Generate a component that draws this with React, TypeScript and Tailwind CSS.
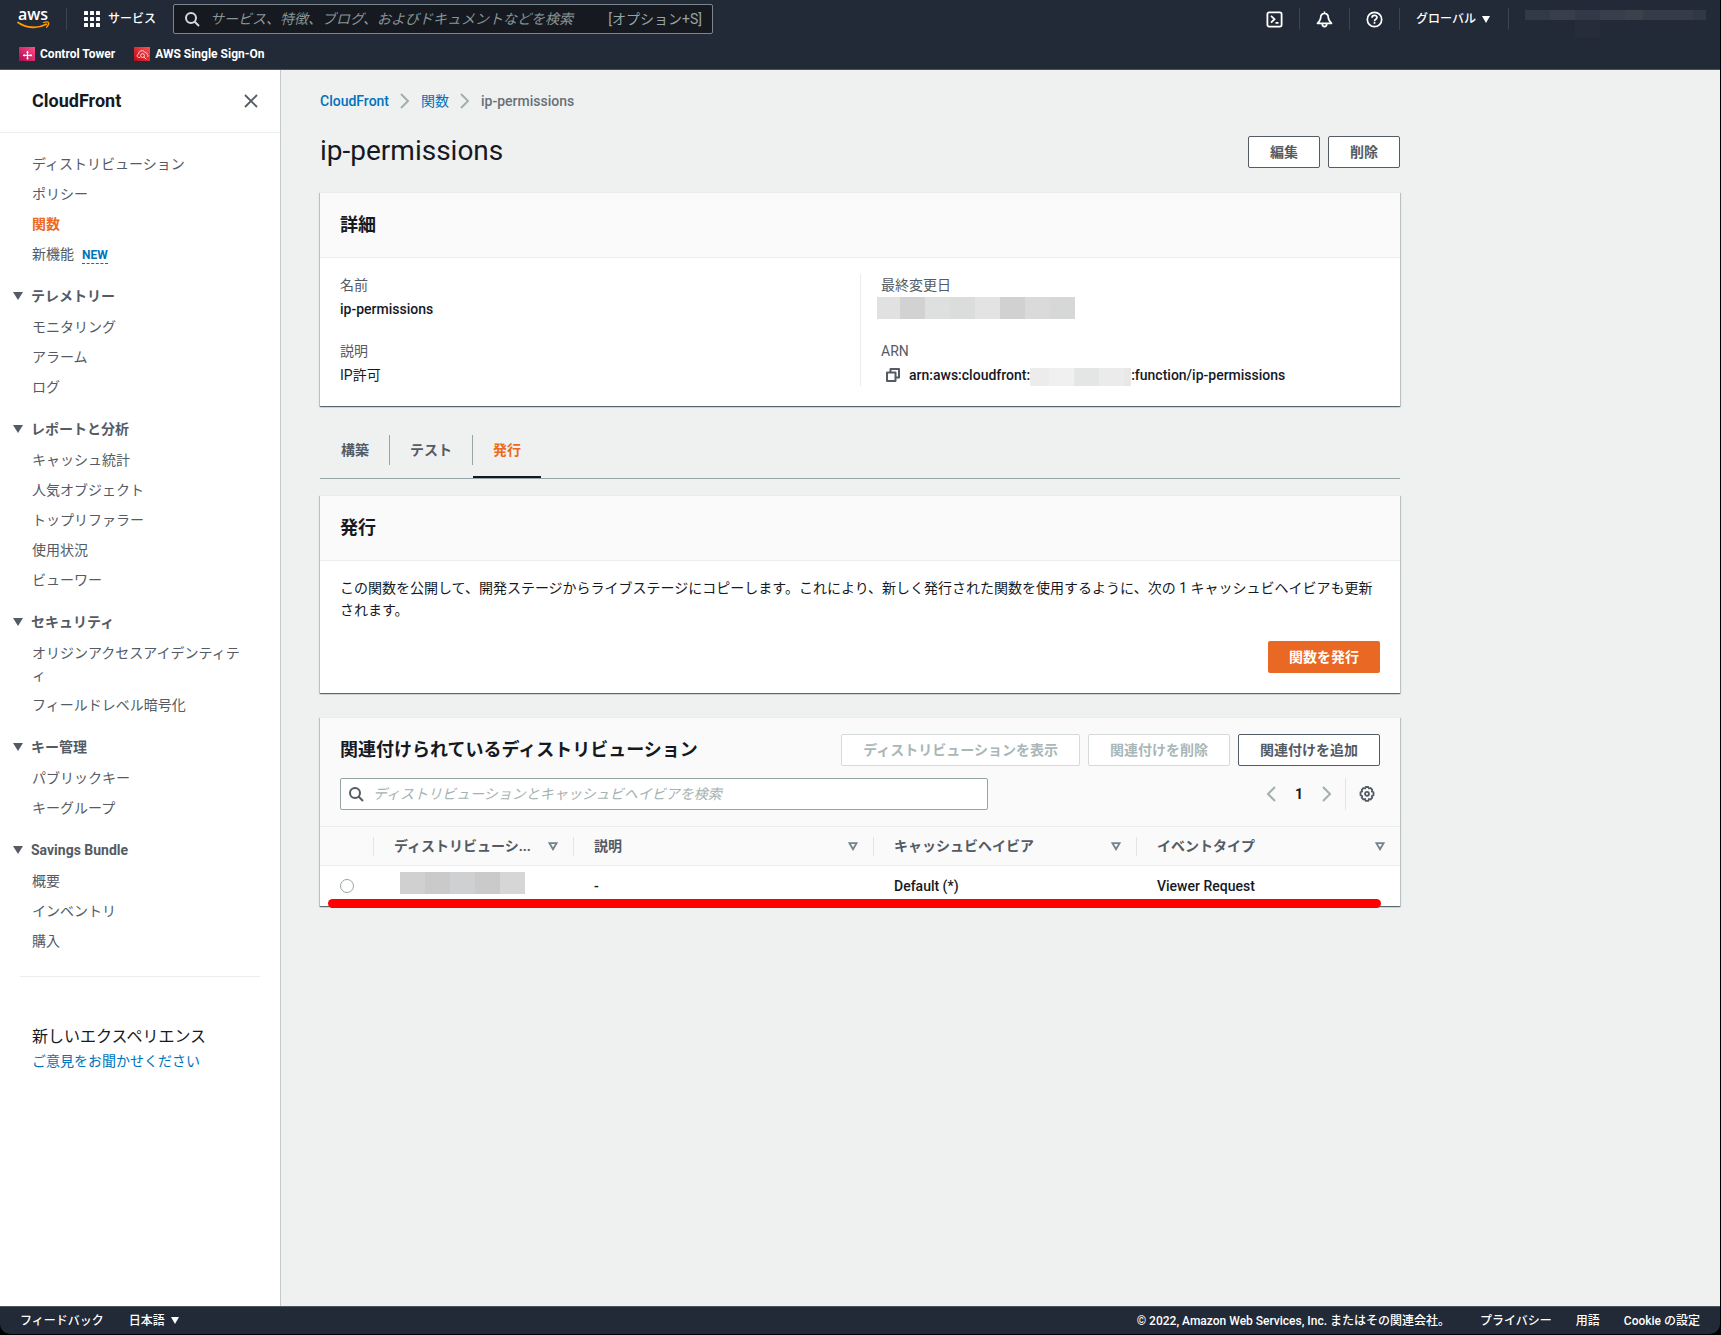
import type { ReactNode } from 'react'

const navTop = ['ディストリビューション', 'ポリシー', '関数']

const navSections = [
  { title: 'テレメトリー', items: ['モニタリング', 'アラーム', 'ログ'] },
  {
    title: 'レポートと分析',
    items: ['キャッシュ統計', '人気オブジェクト', 'トップリファラー', '使用状況', 'ビューワー'],
  },
  { title: 'セキュリティ', items: ['オリジンアクセスアイデンティティ', 'フィールドレベル暗号化'] },
  { title: 'キー管理', items: ['パブリックキー', 'キーグループ'] },
  { title: 'Savings Bundle', items: ['概要', 'インベントリ', '購入'] },
]

function AwsLogo() {
  return (
    <svg width="34" height="34" viewBox="0 -7 34 34" role="img" aria-label="AWS">
      <text
        x="16"
        y="11"
        textAnchor="middle"
        fontFamily="Open Sans"
        fontWeight="600"
        fontSize="16"
        fill="#fff"
      >
        aws
      </text>
      <path d="M1 13.500c8.500 5.800 20 6.300 28.300 1.800" fill="none" stroke="#ff9900" strokeWidth="1.800" strokeLinecap="round" />
      <path d="M26.500 13.500c2-.7 4.500-.8 5 0 .4.900-.4 3.200-1.900 4.700" fill="none" stroke="#ff9900" strokeWidth="1.300" strokeLinecap="round" />
    </svg>
  )
}

function GridIcon() {
  return (
    <svg width="16" height="16" viewBox="0 0 16 16" fill="#fff" aria-hidden="true">
      {[0, 6, 12].map((y) =>
        [0, 6, 12].map((x) => <rect key={`${x}-${y}`} x={x} y={y} width="4" height="4" rx="0.6" />),
      )}
    </svg>
  )
}

function SearchIcon({ className }: { className: string }) {
  return (
    <svg width="16" height="16" viewBox="0 0 16 16" fill="none" stroke="currentColor" strokeWidth="2" className={className} aria-hidden="true">
      <circle cx="7" cy="7" r="5" />
      <path d="M15 15l-4.500-4.500" />
    </svg>
  )
}

function ControlTowerIcon() {
  return (
    <svg width="16" height="14" viewBox="0 0 16 14" aria-hidden="true">
      <defs>
        <linearGradient id="ct" x1="0" y1="1" x2="1" y2="0">
          <stop offset="0" stopColor="#b0084d" />
          <stop offset="1" stopColor="#ff4f8b" />
        </linearGradient>
      </defs>
      <rect width="16" height="14" fill="url(#ct)" />
      <path d="M8.500 4v8.500M4 8.300h9" stroke="#fff" strokeWidth="1.200" />
      <path d="M7.300 5.300h2.400M7.300 11.300h2.400M5.300 7.100v2.400M11.800 7.100v2.400" stroke="#fff" strokeWidth="0.700" />
    </svg>
  )
}

function SsoIcon() {
  return (
    <svg width="16" height="14" viewBox="0 0 16 14" aria-hidden="true">
      <defs>
        <linearGradient id="sso" x1="0" y1="1" x2="1" y2="0">
          <stop offset="0" stopColor="#bd0816" />
          <stop offset="1" stopColor="#ff5252" />
        </linearGradient>
      </defs>
      <rect width="16" height="14" fill="url(#sso)" />
      <g fill="none" stroke="#fff" strokeWidth="0.800">
        <path d="M6 10.500H4.800C2.600 10.300 2.600 7.400 4.600 7c0-3.500 5-4.600 6.300-1.500 1 -.3 1.900.4 1.900 1.500 1.400.5 1.500 2.300.4 3" />
        <circle cx="8.500" cy="8.600" r="1.900" />
        <path d="M9.900 10l2.400 2.300" />
      </g>
    </svg>
  )
}

function CaretDown({ className }: { className: string }) {
  return (
    <svg viewBox="0 0 10 8" preserveAspectRatio="none" className={className} aria-hidden="true">
      <path d="M0 0h10L5 8z" fill="currentColor" />
    </svg>
  )
}

function SortIcon() {
  return (
    <svg width="10" height="9" viewBox="0 0 10 9" className="shrink-0" aria-hidden="true">
      <path d="M1.500 1.200h7L5 7.300z" fill="none" stroke="#74848a" strokeWidth="1.800" />
    </svg>
  )
}

function Chevron({ left = false }: { left?: boolean }) {
  return (
    <svg width="10" height="16" viewBox="0 0 10 16" fill="none" stroke="#a2afaf" strokeWidth="2" aria-hidden="true">
      <path d={left ? 'M9 1L2 8l7 7' : 'M1 1l7 7-7 7'} />
    </svg>
  )
}

function GearIcon() {
  return (
    <svg width="16" height="16" viewBox="0 0 16 16" fill="none" stroke="#545b64" strokeWidth="1.800" aria-hidden="true">
      <path
        strokeLinejoin="round"
        d="M6.700 1h2.600l.6 1.500 1.600-.5 1.800 1.800-.5 1.600 1.700.9v2.900l-1.700.9.500 1.600-1.800 1.800-1.600-.5-.6 1.900H6.700l-.6-1.900-1.600.5-1.800-1.800.5-1.600L1.500 9.200V6.300l1.700-.9-.5-1.600L4.500 2l1.600.5z"
      />
      <circle cx="8" cy="7.800" r="2" />
    </svg>
  )
}

function CopyIcon() {
  return (
    <svg width="14" height="14" viewBox="0 0 14 14" fill="none" stroke="#545b64" strokeWidth="2" aria-hidden="true">
      <path d="M1 4.500h8.500V13H1z" strokeLinejoin="round" />
      <path d="M4.500 4.500V1H13v8.500H9.500" strokeLinejoin="round" />
    </svg>
  )
}

function Button({ children, disabled = false }: { children: ReactNode; disabled?: boolean }) {
  return (
    <button
      type="button"
      disabled={disabled}
      className="h-8 whitespace-nowrap rounded-xs border border-[#545b64] bg-white px-[21px] font-bold text-[#545b64] disabled:border-[#d5dbdb] disabled:text-[#aab7b8]"
    >
      {children}
    </button>
  )
}

function Card({ children }: { children: ReactNode }) {
  return (
    <section className="border-t border-[#eaeded] bg-white shadow-[0_1px_1px_0_rgba(0,28,36,0.5),1px_1px_1px_0_rgba(0,28,36,0.15),-1px_1px_1px_0_rgba(0,28,36,0.15)]">
      {children}
    </section>
  )
}

function CardHeader({ title }: { title: string }) {
  return (
    <div className="flex h-[65px] items-center border-b border-[#eaeded] bg-[#fafafa] px-5">
      <h2 className="text-lg leading-6 font-bold">{title}</h2>
    </div>
  )
}

function Divider() {
  return <span className="h-[22px] w-px bg-[#3b4552]" />
}

function Header() {
  return (
    <header className="flex h-[70px] flex-col border-b border-[#4b5560] bg-[#212a36] text-xs font-medium text-white">
      <div className="flex h-[38px] items-center pr-[14px] pl-[17px]">
        <a href="#home">
          <AwsLogo />
        </a>
        <span className="mr-[17px] ml-[15px] flex">
          <Divider />
        </span>
        <button type="button" className="flex items-center gap-2">
          <GridIcon />
          サービス
        </button>
        <div className="ml-[17px] flex h-[30px] w-[540px] items-center rounded-xs border border-[#7a888d] bg-[#16191f] px-[10px] text-sm font-normal text-[#95a5a6]">
          <SearchIcon className="shrink-0 text-[#d5dbdb]" />
          <input
            type="search"
            aria-label="サービス、特徴、ブログ、およびドキュメントなどを検索"
            placeholder="サービス、特徴、ブログ、およびドキュメントなどを検索"
            className="ml-[10px] min-w-0 flex-1 bg-transparent italic outline-none placeholder:text-[#879596]"
          />
          <span>[オプション+S]</span>
        </div>
        <div className="ml-auto flex items-center gap-4">
          <button type="button" aria-label="CloudShell">
            <svg width="17" height="17" viewBox="0.5 0.5 17 17" fill="none" stroke="#fff" strokeWidth="1.800" aria-hidden="true">
              <rect x="1.900" y="1.900" width="14.200" height="14.200" rx="1.800" />
              <path d="M5.500 5.300L9 8.700l-3.500 3.500M10 12.300h3" />
            </svg>
          </button>
          <Divider />
          <button type="button" aria-label="通知">
            <svg width="17" height="17" viewBox="0.5 0.5 17 17" fill="none" stroke="#fff" strokeWidth="1.700" strokeLinejoin="round" aria-hidden="true">
              <path d="M9 1v2M9 3c-2.300 0-3.800 1.500-3.800 4 0 2.300-1 3.500-3.200 5.800h14c-2.200-2.300-3.200-3.500-3.200-5.800C12.800 4.500 11.300 3 9 3z" />
              <path d="M6.800 13.500c0 3.400 4.400 3.400 4.400 0" />
            </svg>
          </button>
          <Divider />
          <button type="button" aria-label="ヘルプ">
            <svg width="17" height="17" viewBox="0.5 0.5 17 17" fill="none" stroke="#fff" strokeWidth="1.700" aria-hidden="true">
              <circle cx="9" cy="9" r="7.200" />
              <path d="M6.500 7.300C6.500 4 11.500 4.200 11.500 7c0 1.800-2.500 1.800-2.500 3.700M9 11.600v1.700" />
            </svg>
          </button>
          <Divider />
          <button type="button" className="flex items-center gap-[6px] pr-[2px]">
            グローバル
            <CaretDown className="h-[7px] w-2" />
          </button>
          <Divider />
          <div className="relative flex h-[10px] -translate-y-1">
            <span className="w-[25px] bg-[#323a48]" />
            <span className="w-[25px] bg-[#383f4b]" />
            <span className="w-[25px] bg-[#343949]" />
            <span className="w-[25px] bg-[#383f4a]" />
            <span className="w-[18px] bg-[#3b424c]" />
            <span className="w-[50px] bg-[#353c48]" />
            <span className="w-[13px] bg-[#303845]" />
            <span className="absolute top-[10px] left-[50px] h-[18px] w-[25px] bg-[#272c3a]" />
          </div>
        </div>
      </div>
      <nav className="flex flex-1 items-center gap-[19px] px-[19px] pt-px font-bold">
        <a href="#controltower" className="flex items-center gap-[5px]">
          <ControlTowerIcon />
          Control Tower
        </a>
        <a href="#sso" className="flex items-center gap-[5px]">
          <SsoIcon />
          AWS Single Sign-On
        </a>
      </nav>
    </header>
  )
}

function Sidebar() {
  return (
    <aside className="w-[281px] shrink-0 border-r border-[#c5cbcb] bg-white text-[#545b64]">
      <div className="flex h-[63px] items-center justify-between border-b border-[#eaeded] pr-[22px] pl-8">
        <h2 className="text-lg font-bold text-[#16191f]">CloudFront</h2>
        <button type="button" aria-label="閉じる">
          <svg width="14" height="14" viewBox="0 0 14 14" stroke="#545b64" strokeWidth="1.800" aria-hidden="true">
            <path d="M1 1l12 12M13 1L1 13" />
          </svg>
        </button>
      </div>
      <nav className="px-8 pt-5">
        <ul className="space-y-2">
          {navTop.map((item) => (
            <li key={item}>
              <a href="#nav" className={item === '関数' ? 'font-bold text-[#ec6a1e]' : ''}>
                {item}
              </a>
            </li>
          ))}
          <li>
            <a href="#nav">新機能</a>
            <a href="#new" className="ml-2 border-b border-dashed border-[#0073bb] pb-px text-xs font-bold text-[#0073bb]">
              NEW
            </a>
          </li>
        </ul>
        {navSections.map((section) => (
          <div key={section.title} className="mt-[19px]">
            <button type="button" className="-ml-[19px] flex items-center gap-2 leading-6 font-bold">
              <CaretDown className="h-2 w-[10px]" />
              {section.title}
            </button>
            <ul className="mt-2 space-y-2">
              {section.items.map((item) => (
                <li key={item}>
                  <a href="#nav">{item}</a>
                </li>
              ))}
            </ul>
          </div>
        ))}
      </nav>
      <hr className="mx-5 mt-6 border-[#eaeded]" />
      <div className="px-8 pt-12">
        <p className="text-base leading-6 text-[#16191f]">新しいエクスペリエンス</p>
        <a href="#feedback" className="block pt-px text-[#0073bb]">
          ご意見をお聞かせください
        </a>
      </div>
    </aside>
  )
}

function Details() {
  return (
    <Card>
      <CardHeader title="詳細" />
      <dl className="grid grid-cols-2 px-5 pt-4 pb-5">
        <div className="space-y-5">
          <div>
            <dt className="text-[#545b64]">名前</dt>
            <dd className="mt-[2px] font-medium">ip-permissions</dd>
          </div>
          <div>
            <dt className="text-[#545b64]">説明</dt>
            <dd className="mt-[2px]">IP許可</dd>
          </div>
        </div>
        <div className="space-y-5 border-l border-[#eaeded] pl-5">
          <div>
            <dt className="text-[#545b64]">最終変更日</dt>
            <dd className="-ml-1 flex h-6 pt-px pb-px">
              <span className="w-[23px] bg-[#e1e1e1]" />
              <span className="w-[25px] bg-[#d2d2d2]" />
              <span className="w-[25px] bg-[#dedfdf]" />
              <span className="w-[25px] bg-[#dadddc]" />
              <span className="w-[25px] bg-[#e3e3e3]" />
              <span className="w-[25px] bg-[#d1d1d1]" />
              <span className="w-[25px] bg-[#dadada]" />
              <span className="w-[25px] bg-[#d5d8d7]" />
            </dd>
          </div>
          <div>
            <dt className="text-[#545b64]">ARN</dt>
            <dd className="mt-[2px] flex items-center pl-[5px] font-medium">
              <button type="button" aria-label="コピー" className="mr-[9px]">
                <CopyIcon />
              </button>
              arn:aws:cloudfront:
              <span className="flex h-[18px] self-end">
                <span className="w-[19px] bg-[#ececec]" />
                <span className="w-[25px] bg-[#f0f0f0]" />
                <span className="w-[25px] bg-[#e3e6e5]" />
                <span className="w-[25px] bg-[#ebebeb]" />
                <span className="w-[7px] bg-[#e8e8e8]" />
              </span>
              :function/ip-permissions
            </dd>
          </div>
        </div>
      </dl>
    </Card>
  )
}

function Tabs() {
  return (
    <div role="tablist" className="mt-4 mb-4 flex items-center border-b border-[#95a5a6] pl-px font-bold text-[#545b64]">
      <button type="button" role="tab" aria-selected="false" className="h-14 px-5">
        構築
      </button>
      <span className="h-[30px] w-px bg-[#95a5a6]" />
      <button type="button" role="tab" aria-selected="false" className="h-14 px-5">
        テスト
      </button>
      <span className="h-[30px] w-px bg-[#95a5a6]" />
      <button type="button" role="tab" aria-selected="true" className="h-14 border-y-2 border-t-transparent border-b-[#16191f] px-5 text-[#ec6a1e]">
        発行
      </button>
    </div>
  )
}

function HeadCell({ children, className }: { children: ReactNode; className: string }) {
  return (
    <th scope="col" className={`p-0 ${className}`}>
      <div className="flex h-[19px] items-center justify-between border-l border-[#e1e5e5] pr-[15px] pl-5">
        <span className="whitespace-nowrap">{children}</span>
        <SortIcon />
      </div>
    </th>
  )
}

function Distributions() {
  return (
    <div className="relative mt-6">
      <Card>
        <div className="bg-[#fafafa] px-5 py-4">
          <div className="flex items-center justify-between">
            <h2 className="text-lg leading-6 font-bold">関連付けられているディストリビューション</h2>
            <div className="flex gap-2">
              <Button disabled>ディストリビューションを表示</Button>
              <Button disabled>関連付けを削除</Button>
              <Button>関連付けを追加</Button>
            </div>
          </div>
          <div className="mt-3 flex items-center">
            <div className="flex h-8 w-[648px] items-center rounded-xs border border-[#95a5a6] bg-white px-[7px]">
              <SearchIcon className="shrink-0 text-[#545b64]" />
              <input
                type="search"
                aria-label="ディストリビューションとキャッシュビヘイビアを検索"
                placeholder="ディストリビューションとキャッシュビヘイビアを検索"
                className="ml-[9px] min-w-0 flex-1 italic outline-none placeholder:text-[#a5b2b3]"
              />
            </div>
            <div className="ml-auto flex items-center">
              <button type="button" aria-label="前のページ">
                <Chevron left />
              </button>
              <button type="button" className="px-[19px] font-bold text-[#16191f]">
                1
              </button>
              <button type="button" aria-label="次のページ">
                <Chevron />
              </button>
              <span className="mx-[13px] h-8 w-px bg-[#e1e5e5]" />
              <button type="button" aria-label="設定" className="mr-[5px]">
                <GearIcon />
              </button>
            </div>
          </div>
        </div>
        <table className="w-full table-fixed border-collapse text-left">
          <thead className="bg-[#fafafa] text-[#545b64]">
            <tr className="h-[39px] border-y border-[#eaeded]">
              <th scope="col" aria-label="選択" className="w-[53px] p-0" />
              <HeadCell className="w-[200px]">ディストリビューシ...</HeadCell>
              <HeadCell className="w-[300px]">説明</HeadCell>
              <HeadCell className="w-[263px]">キャッシュビヘイビア</HeadCell>
              <HeadCell className="w-auto">イベントタイプ</HeadCell>
            </tr>
          </thead>
          <tbody>
            <tr className="h-10 font-medium">
              <td className="p-0 pl-5">
                <input
                  type="radio"
                  name="distribution"
                  aria-label="ディストリビューションを選択"
                  className="block size-[14px] appearance-none rounded-full border border-[#95a5a6] bg-white"
                />
              </td>
              <td className="p-0 pb-[6px] pl-[27px]">
                <div className="flex h-[22px]">
                  <span className="w-[25px] bg-[#d0d0d0]" />
                  <span className="w-[25px] bg-[#cacaca]" />
                  <span className="w-[25px] bg-[#cfd0d2]" />
                  <span className="w-[25px] bg-[#cacaca]" />
                  <span className="w-[25px] bg-[#d6d6d6]" />
                </div>
              </td>
              <td className="p-0 pl-[21px]">-</td>
              <td className="p-0 pl-[21px]">Default (*)</td>
              <td className="p-0 pl-[21px]">Viewer Request</td>
            </tr>
          </tbody>
        </table>
      </Card>
      <span className="absolute right-[19px] -bottom-[2px] left-2 h-[9px] rounded-full bg-[#ff0000]" />
    </div>
  )
}

function Footer() {
  return (
    <footer className="flex h-7 items-center rounded-b-[10px] border-t border-[#4b5560] bg-[#212a36] px-5 text-xs font-medium text-white">
      <a href="#feedback">フィードバック</a>
      <button type="button" className="ml-[25px] flex items-center gap-[6px]">
        日本語
        <CaretDown className="h-[7px] w-2" />
      </button>
      <span className="ml-auto">© 2022, Amazon Web Services, Inc. またはその関連会社。</span>
      <a href="#privacy" className="ml-[30px]">
        プライバシー
      </a>
      <a href="#terms" className="ml-6">
        用語
      </a>
      <a href="#cookies" className="ml-6">
        Cookie の設定
      </a>
    </footer>
  )
}

export default function App() {
  return (
    <div
      lang="ja"
      className="flex min-h-screen flex-col border-r border-b border-black bg-black font-[Roboto,'Noto_Sans_CJK_JP',sans-serif] text-sm leading-[22px] text-[#16191f]"
    >
      <Header />
      <div className="flex flex-1 bg-[#eff1f1]">
        <Sidebar />
        <main className="min-w-0 flex-1 px-[39px] pt-5">
          <div className="max-w-[1080px]">
            <nav aria-label="パンくずリスト" className="flex items-center gap-[11px] text-[#687078]">
              <a href="#cloudfront" className="font-medium text-[#0073bb]">
                CloudFront
              </a>
              <Chevron />
              <a href="#functions" className="text-[#0073bb]">
                関数
              </a>
              <Chevron />
              <span className="font-medium">ip-permissions</span>
            </nav>
            <div className="mt-[22px] mb-6 flex items-end justify-between">
              <h1 className="text-[28px] leading-[34px]">ip-permissions</h1>
              <div className="flex gap-2">
                <Button>編集</Button>
                <Button>削除</Button>
              </div>
            </div>
            <Details />
            <Tabs />
            <Card>
              <CardHeader title="発行" />
              <div className="px-5 pt-4 pb-5">
                <p>
                  この関数を公開して、開発ステージからライブステージにコピーします。これにより、新しく発行された関数を使用するように、次の 1 キャッシュビヘイビアも更新されます。
                </p>
                <div className="mt-5 flex justify-end">
                  <button type="button" className="h-8 rounded-xs bg-[#e96824] px-[21px] font-bold text-white">
                    関数を発行
                  </button>
                </div>
              </div>
            </Card>
            <Distributions />
          </div>
        </main>
      </div>
      <Footer />
    </div>
  )
}
